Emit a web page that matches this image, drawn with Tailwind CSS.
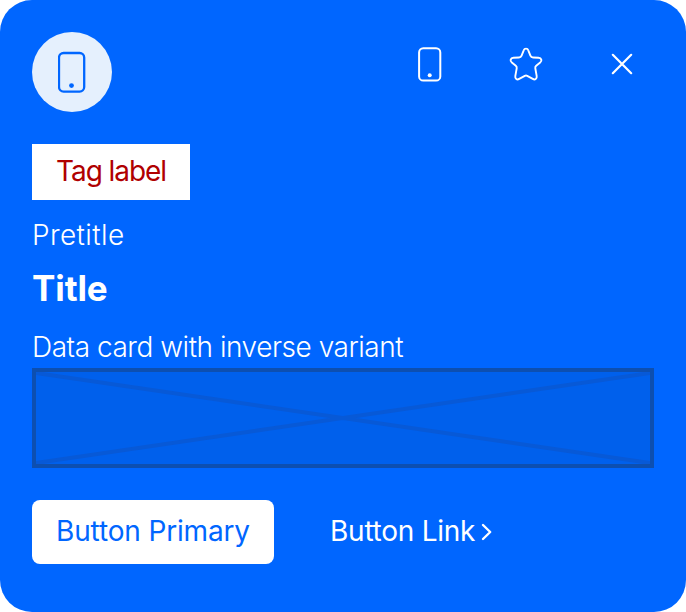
<!DOCTYPE html>
<html lang="en">
<head>
<meta charset="utf-8">
<title>Data card</title>
<script src="https://cdn.jsdelivr.net/npm/@tailwindcss/browser@4"></script>
</head>
<body class="bg-white overflow-hidden font-['Inter','Open_Sans',sans-serif] text-white">
<article class="w-[686px] h-[612px] rounded-[32px] bg-[#0066ff] p-8 flex flex-col items-start">
  <header class="w-full h-20 flex justify-between items-start">
    <div class="size-20 rounded-full bg-[#e5f0fd] text-[#0066ff] flex items-center justify-center">
      <svg class="w-7 h-[42px]" viewBox="0 0 28 42" fill="none" stroke="currentColor" stroke-width="2.3"><rect x="1" y="2" width="25.2" height="38.6" rx="4.6"/><circle cx="13.5" cy="34.6" r="2.4" fill="currentColor" stroke="none"/></svg>
    </div>
    <div class="flex">
      <button class="w-24 h-16 flex items-center justify-center" aria-label="Device">
        <svg class="size-10" viewBox="0 0 40 40" fill="none" stroke="currentColor" stroke-width="2"><rect x="9.1" y="4.2" width="21.2" height="32.4" rx="4.2"/><circle cx="19.7" cy="31.2" r="2" fill="currentColor" stroke="none"/></svg>
      </button>
      <button class="w-24 h-16 flex items-center justify-center" aria-label="Favorite">
        <svg class="size-10" viewBox="0 0 40 40" fill="none" stroke="currentColor" stroke-width="1.9" stroke-linejoin="round"><path d="M17.7 6.3C18.5 4.1 21.5 4.1 22.3 6.3L24.4 11.6C24.9 12.8 25.7 13.4 27.1 13.5L32.5 13.8C35.5 14 36.4 16.8 34.2 18.5L30.2 21.8C29.4 22.5 29.1 23.3 29.3 24.3L30.7 32.1C31.1 34.8 29 36.3 26.8 34.9L21.2 31.8Q20 31.2 18.8 31.8L13.2 34.9C11 36.3 8.9 34.8 9.3 32.1L10.7 24.3C10.9 23.3 10.6 22.5 9.8 21.8L5.8 18.5C3.6 16.8 4.5 14 7.5 13.8L12.9 13.5C14.3 13.4 15.1 12.8 15.6 11.6Z"/></svg>
      </button>
      <button class="w-16 h-16 ml-4 flex items-center justify-center" aria-label="Close">
        <svg class="size-10" viewBox="0 0 40 40" fill="none" stroke="currentColor" stroke-width="2.2" stroke-linecap="round"><path d="M10.8 10.8L29.2 29.2M29.2 10.8L10.8 29.2"/></svg>
      </button>
    </div>
  </header>
  <div class="mt-8 w-[158px] h-14 px-6 bg-white text-[#b00000] text-[28px] leading-[54px] whitespace-nowrap tracking-[-1.05px]">Tag label</div>
  <p class="mt-4 h-10 text-[28px] leading-[38px] font-light tracking-[0.4px] whitespace-nowrap">Pretitle</p>
  <h2 class="mt-2 h-12 text-[35px] leading-[48px] font-bold tracking-[-0.1px] whitespace-nowrap">Title</h2>
  <p class="mt-4 h-10 text-[28px] leading-[38px] font-light tracking-[-0.47px] whitespace-nowrap">Data card with inverse variant</p>
  <div class="w-full h-[100px] border-4 border-[#0d4fb0] bg-[#0060ec]">
    <svg class="block w-full h-full" viewBox="0 0 614 92" preserveAspectRatio="none" stroke="#0759d7" stroke-width="4"><path d="M0 1L614 91M614 1L0 91"/></svg>
  </div>
  <footer class="mt-8 flex">
    <button class="w-[242px] h-16 rounded-lg bg-white px-6 pb-0.5 text-left text-[#0066ff] text-[28px] leading-[62px] tracking-[-0.15px] whitespace-nowrap">Button Primary</button>
    <a class="ml-8 h-16 pl-6 flex text-[28px] leading-[62px] tracking-[-0.25px] whitespace-nowrap"><span class="w-[147px]">Button Link</span><svg class="ml-1 mt-[22px] w-3 h-5" viewBox="0 0 12 20" fill="none" stroke="currentColor" stroke-width="2.4" stroke-linecap="round" stroke-linejoin="round"><path d="M2 3L9.2 10L2 17"/></svg></a>
  </footer>
</article>
</body>
</html>
